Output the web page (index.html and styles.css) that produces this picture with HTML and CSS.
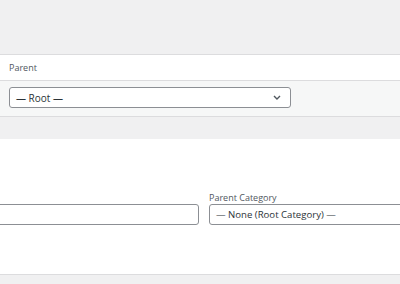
FILE: index.html
```html
<!DOCTYPE html>
<html lang="en">
<head>
  <meta charset="UTF-8" />
  <title>Categories</title>
  <link rel="stylesheet" href="styles.css">
</head>
<body>
  <div class="page">
    <div class="table">
      <div class="table-head">Parent</div>
      <div class="table-row">
        <div class="select select-root">
          <span>— Root —</span>
          <svg class="chevron" width="8" height="5" viewBox="0 0 8 5"><path d="M1 1l3 3 3-3" fill="none" stroke="#50575e" stroke-width="1.4"/></svg>
        </div>
      </div>
    </div>

    <div class="panel">
      <div class="form-row">
        <div class="field field-name">
          <div class="input"></div>
        </div>
        <div class="field field-parent">
          <label>Parent Category</label>
          <div class="select select-wide"><span>— None (Root Category) —</span></div>
        </div>
      </div>
    </div>
  </div>
</body>
</html>
```

FILE: styles.css
```css
body {
  margin: 0;
  background: #f0f0f1;
  color: #2c3338;
  font-family: "Open Sans", sans-serif;
  overflow: hidden;
}
.page {
  padding-top: 54px;
}
/* tabella con intestazione */
.table {
  background: #fff;
  border-top: 1px solid #dcdcde;
  border-bottom: 1px solid #dcdcde;
}
.table-head {
  height: 25px;
  line-height: 25px;
  padding-left: 9px;
  font-size: 9px;
  color: #50575e;
  border-bottom: 1px solid #dcdcde;
}
.table-row {
  background: #f6f7f7;
  height: 35px;
  display: flex;
  align-items: center;
  padding-left: 9px;
}
.select {
  box-sizing: border-box;
  height: 21px;
  border: 1px solid #8c8f94;
  border-radius: 3px;
  background: #fff;
  display: flex;
  align-items: center;
  padding: 0 6px;
  font-size: 10px;
  color: #2c3338;
}
.select-root {
  width: 282px;
  justify-content: space-between;
  margin-top: -2px;
}
.chevron {
  margin-right: 3px;
}
/* pannello del form */
.panel {
  margin-top: 22px;
  background: #fff;
  height: 135px;
  border-bottom: 1px solid #dcdcde;
  overflow: hidden;
}
.form-row {
  display: flex;
  gap: 10px;
  margin-left: -40px;
  padding-top: 53px;
}
.field {
  display: flex;
  flex-direction: column;
  justify-content: flex-end;
}
.field-name {
  width: 239px;
  flex: none;
}
.field-parent {
  width: 191px;
  flex: none;
}
.field label {
  font-size: 9px;
  color: #50575e;
  margin-bottom: 1px;
  line-height: 11px;
}
.input {
  box-sizing: border-box;
  height: 21px;
  border: 1px solid #8c8f94;
  border-radius: 3px;
  background: #fff;
}
.select-wide {
  width: 260px;
  font-size: 9.6px;
}
```
